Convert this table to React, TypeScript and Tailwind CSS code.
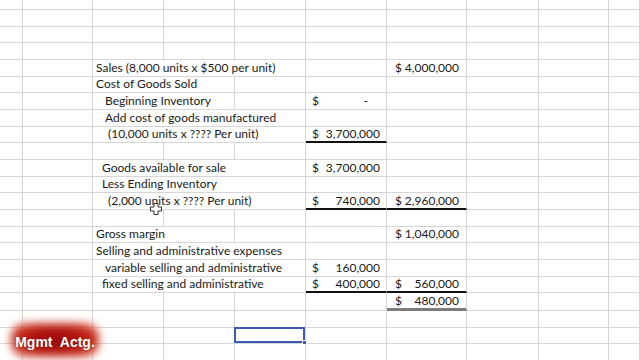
type Money = { num: string; dash?: boolean };

type RowProps = {
  h?: string;
  label?: string;
  indent?: string;
  span?: 'CD' | 'CE';
  e?: Money;
  f?: Money;
  eLine?: string;
  fLine?: string;
  sel?: boolean;
};

const GRID = 'border-r border-b border-r-[#d6d6d6] border-b-[#d6d6d6]';
const LINE = 'border-r border-b-2 border-r-[#d6d6d6] border-b-[#111]';
const DOUBLE = 'border-r border-b-[3px] border-r-[#d6d6d6] border-b-[#7c7c7c]';

function MoneyCell({ m, pl, pr }: { m: Money; pl: string; pr: string }) {
  return (
    <div className={`flex h-full items-center justify-between ${pl}`}>
      <span>$</span>
      <span className={m.dash ? 'pr-[18px]' : pr}>{m.num}</span>
    </div>
  );
}

function Row({ h = 'h-[16.667px]', label, indent = 'pl-[3px]', span, e, f, eLine, fLine, sel }: RowProps) {
  return (
    <div className={`flex shrink-0 ${h}`}>
      <div className={`w-[23px] shrink-0 ${GRID}`} />
      <div className={`w-[70px] shrink-0 ${GRID}`} />
      {span === 'CE' ? (
        <div className={`w-[213px] shrink-0 ${GRID} flex items-center whitespace-nowrap ${indent}`}>{label}</div>
      ) : span === 'CD' ? (
        <>
          <div className={`w-[142px] shrink-0 ${GRID} flex items-center whitespace-nowrap ${indent}`}>{label}</div>
          <div className={`w-[71px] shrink-0 ${GRID}`} />
        </>
      ) : (
        <>
          <div className={`w-[71px] shrink-0 ${GRID}`} />
          <div className={`w-[71px] shrink-0 ${GRID}`} />
          <div className={`relative w-[71px] shrink-0 ${GRID}`}>
            {sel && (
              <div className="absolute left-[-1px] top-[-1px] right-0 bottom-0 border-2 border-[#3e5ab6]">
                <div className="absolute right-[-4px] bottom-[-4px] h-[5px] w-[5px] border border-white bg-[#3e5ab6]" />
              </div>
            )}
          </div>
        </>
      )}
      <div className={`w-[81px] shrink-0 ${eLine ?? GRID}`}>
        {e && <MoneyCell m={e} pl="pl-[6px]" pr="pr-[6px]" />}
      </div>
      <div className={`w-[80px] shrink-0 ${fLine ?? GRID}`}>
        {f && <MoneyCell m={f} pl="pl-[8px]" pr="pr-[7px]" />}
      </div>
      <div className={`w-[72px] shrink-0 ${GRID}`} />
      <div className={`w-[70px] shrink-0 ${GRID}`} />
      <div className={`w-[31px] shrink-0 ${GRID}`} />
    </div>
  );
}

export default function App() {
  return (
    <div className="relative h-[360px] w-[640px] overflow-hidden bg-white text-[12px] leading-[16px] text-[#1a1a1a] [font-family:Lato,'Open_Sans',sans-serif]">
      <div className="flex flex-col">
        <Row h="h-[10px]" />
        <Row />
        <Row />
        <Row />
        <Row span="CE" label="Sales (8,000 units x $500 per unit)" f={{ num: '4,000,000' }} />
        <Row span="CD" label="Cost of Goods Sold" />
        <Row span="CD" indent="pl-[12px]" label="Beginning Inventory" e={{ num: '-', dash: true }} />
        <Row span="CE" indent="pl-[12px]" label="Add cost of goods manufactured" />
        <Row span="CE" indent="pl-[15px]" label="(10,000 units x ???? Per unit)" e={{ num: '3,700,000' }} eLine={LINE} />
        <Row />
        <Row span="CE" indent="pl-[9px]" label="Goods available for sale" e={{ num: '3,700,000' }} />
        <Row span="CE" indent="pl-[9px]" label="Less Ending Inventory" />
        <Row
          span="CE"
          indent="pl-[15px]"
          label="(2,000 units x ???? Per unit)"
          e={{ num: '740,000' }}
          f={{ num: '2,960,000' }}
          eLine={LINE}
          fLine={LINE}
        />
        <Row />
        <Row span="CD" label="Gross margin" f={{ num: '1,040,000' }} />
        <Row span="CE" label="Selling and administrative expenses" />
        <Row span="CE" indent="pl-[12px]" label="variable selling and administrative" e={{ num: '160,000' }} />
        <Row
          span="CE"
          indent="pl-[9px]"
          label="fixed selling and administrative"
          e={{ num: '400,000' }}
          f={{ num: '560,000' }}
          eLine={LINE}
          fLine={LINE}
        />
        <Row h="h-[18px]" f={{ num: '480,000' }} fLine={DOUBLE} />
        <Row />
        <Row sel />
        <Row />
      </div>

      {/* cursor */}
      <svg className="absolute left-[150px] top-[203px]" width="12" height="12" viewBox="0 0 12 12">
        <path d="M4 0.5h4v3.5h3.5v4H8v3.5H4V8H0.5V4H4z" fill="#fff" stroke="#333" strokeWidth="1" />
      </svg>

      {/* logo */}
      <div className="absolute left-[9px] top-[321px] h-[38px] w-[92px]">
        <div className="absolute inset-[2px] rounded-[14px] bg-[radial-gradient(ellipse_at_center,#930a0a_0%,#b0120e_38%,#c42a1b_62%,#dc6a50_84%,#f6d8cd_100%)] blur-[4px]" />
        <div className="absolute inset-0 flex items-center justify-center whitespace-pre pt-[4px] text-[14px] font-bold text-white [font-family:'Liberation_Sans',Arial,sans-serif] [text-shadow:0_0_2px_rgba(0,0,0,0.35)]">
          Mgmt  Actg.
        </div>
      </div>
    </div>
  );
}
